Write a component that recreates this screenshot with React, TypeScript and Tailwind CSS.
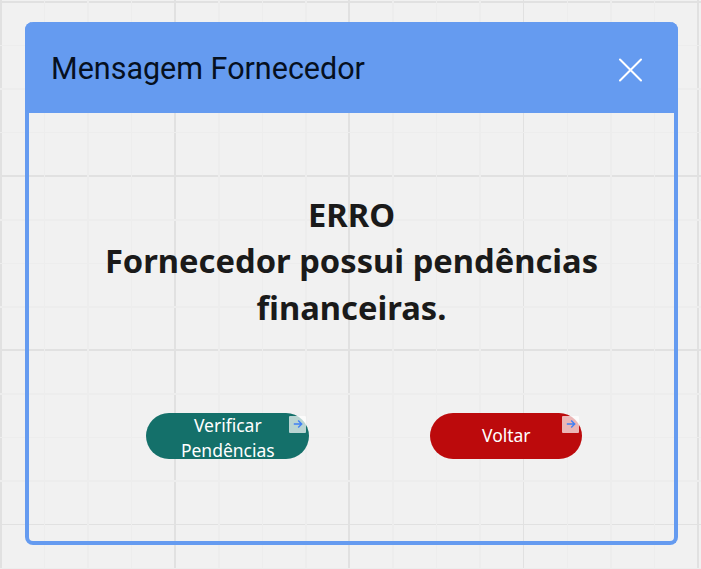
import type { ReactNode } from "react";

const minorX =
  "bg-[repeating-linear-gradient(90deg,transparent_0_42.8px,#ededed_42.8px_44.4px,transparent_44.4px_86.3px,#ededed_86.3px_87.9px,transparent_87.9px_129.9px,#ededed_129.9px_131.5px,transparent_131.5px_174.25px)]";
const minorY =
  "bg-[repeating-linear-gradient(180deg,transparent_0_42.8px,#ededed_42.8px_44.4px,transparent_44.4px_86.3px,#ededed_86.3px_87.9px,transparent_87.9px_129.9px,#ededed_129.9px_131.5px,transparent_131.5px_174.25px)]";
const majorX =
  "bg-[repeating-linear-gradient(90deg,#e1e1e1_0_1.7px,transparent_1.7px_174.25px)]";
const majorY =
  "bg-[repeating-linear-gradient(180deg,#e1e1e1_0_1.7px,transparent_1.7px_174.25px)]";

function CanvasGrid() {
  return (
    <div className="absolute inset-0 overflow-hidden">
      <div className={`absolute inset-y-0 left-0 right-0 ${majorX}`} />
      <div className={`absolute inset-x-0 top-[1.4px] bottom-0 ${majorY}`} />
      <div className={`absolute inset-y-0 left-px right-0 ${minorX}`} />
      <div className={`absolute inset-x-0 top-[2px] bottom-0 ${minorY}`} />
    </div>
  );
}

function LinkBadge() {
  return (
    <span className="absolute top-[3px] right-[3px] flex size-[17px] items-center justify-center rounded-[1px] bg-white/70">
      <svg viewBox="0 0 10 10" className="size-[10px]" fill="none" stroke="#4080f5" strokeWidth="1.4">
        <path d="M0.8 5H8.6M5.2 1.5L8.7 5L5.2 8.5" />
      </svg>
    </span>
  );
}

function PillButton({ className, children }: { className: string; children: ReactNode }) {
  return (
    <button
      className={`relative flex h-[46px] items-center justify-center rounded-full text-center text-[17.5px] leading-[25px] text-white ${className}`}
    >
      {children}
      <LinkBadge />
    </button>
  );
}

export default function App() {
  return (
    <div className="relative h-[569px] w-[701px] overflow-hidden bg-[#f1f1f1] pt-[22px] pl-[25px] font-['Noto_Sans',sans-serif]">
      <CanvasGrid />
      <section className="relative flex h-[523px] w-[653px] flex-col rounded-lg border-[4.5px] border-t-0 border-[#659bf0]">
        <header className="-mx-[4px] flex h-[91px] shrink-0 items-center justify-between rounded-t-lg bg-[#659bf0] pr-[36px] pl-[26px]">
          <h1 className="pt-[2px] font-['Roboto',sans-serif] text-[30.5px] leading-[40px] text-[#06101f]">
            Mensagem Fornecedor
          </h1>
          <svg viewBox="0 0 24 24" className="mt-1 size-6" fill="none" stroke="white" strokeWidth="2" strokeLinecap="round">
            <path d="M2 1.5L23 22.5M23 1.5L2 22.5" />
          </svg>
        </header>
        <p className="mt-[79px] text-center text-[32.7px] leading-[46.3px] font-bold text-[#1a1a1a]">
          ERRO
          <br />
          Fornecedor possui pendências
          <br />
          financeiras.
        </p>
        <div className="mt-[81.7px] flex pl-[117.3px]">
          <PillButton className="w-[163px] bg-[#14706a]">
            <span className="pt-[4px]">
              Verificar
              <br />
              Pendências
            </span>
          </PillButton>
          <PillButton className="ml-[121px] w-[152px] bg-[#bc0a0c]">Voltar</PillButton>
        </div>
      </section>
    </div>
  );
}
